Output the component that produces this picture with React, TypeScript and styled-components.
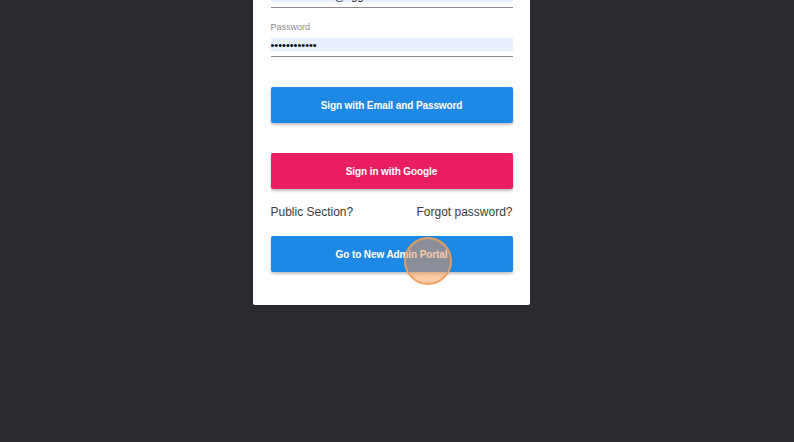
import styled, { createGlobalStyle } from "styled-components";

const GlobalStyle = createGlobalStyle`
  html, body {
    margin: 0;
    padding: 0;
    background: #2a2b2f;
    height: 100%;
    overflow: hidden;
  }
  body {
    font-family: "Liberation Sans", Arial, sans-serif;
  }
`;

const Page = styled.div`
  display: flex;
  justify-content: center;
  padding-right: 12px;
`;

const Card = styled.div`
  position: relative;
  width: 277px;
  box-sizing: border-box;
  margin-top: -27px;
  padding: 0 17px 33px 18px;
  background: #fff;
  border-radius: 0 0 2px 2px;
  display: flex;
  flex-direction: column;
`;

const Field = styled.div<{ $gap: number }>`
  display: flex;
  flex-direction: column;
  border-bottom: 1px solid #8a8a8a;
  padding-bottom: 5px;
  margin-bottom: ${({ $gap }) => $gap}px;
`;

const Label = styled.label`
  font-size: 9px;
  line-height: 11px;
  color: #8c8c8c;
  margin-bottom: 5px;
`;

const Input = styled.input`
  height: 13px;
  border: none;
  outline: none;
  padding: 0;
  margin: 0;
  background: #e8f0fe;
  font-family: "Liberation Sans", Arial, sans-serif;
  font-size: 11px;
  color: #000;
`;

const Button = styled.button<{ $color: string; $last?: boolean }>`
  height: 36px;
  border: none;
  border-radius: 2px;
  background: ${({ $color }) => $color};
  color: #fff;
  font-family: "Liberation Sans", Arial, sans-serif;
  font-size: 10px;
  font-weight: bold;
  letter-spacing: -0.1px;
  box-shadow: 0 2px 3px rgba(0, 0, 0, 0.25);
  cursor: pointer;
  margin-bottom: ${({ $last }) => ($last ? 0 : 30)}px;
  padding: 0;
`;

const Links = styled.div`
  display: flex;
  justify-content: space-between;
  font-size: 12px;
  line-height: 14px;
  color: #3c3c3c;
  margin: -14px 0 17px;
`;

const ClickMark = styled.div`
  position: absolute;
  left: 151px;
  top: 264px;
  width: 44px;
  height: 44px;
  border-radius: 50%;
  border: 2px solid rgba(240, 160, 90, 0.85);
  background: rgba(245, 150, 80, 0.5);
  pointer-events: none;
`;

export default function App() {
  return (
    <>
      <GlobalStyle />
      <Page>
        <Card>
          <Field $gap={14}>
            <Label>Email</Label>
            <Input type="text" defaultValue="administrator@egg.com" readOnly />
          </Field>
          <Field $gap={30}>
            <Label>Password</Label>
            <Input type="password" defaultValue="password1234" readOnly />
          </Field>
          <Button $color="#1e88e5">Sign with Email and Password</Button>
          <Button $color="#e91e63">Sign in with Google</Button>
          <Links>
            <span>Public Section?</span>
            <span>Forgot password?</span>
          </Links>
          <Button $color="#1e88e5" $last>
            Go to New Admin Portal
          </Button>
          <ClickMark />
        </Card>
      </Page>
    </>
  );
}
